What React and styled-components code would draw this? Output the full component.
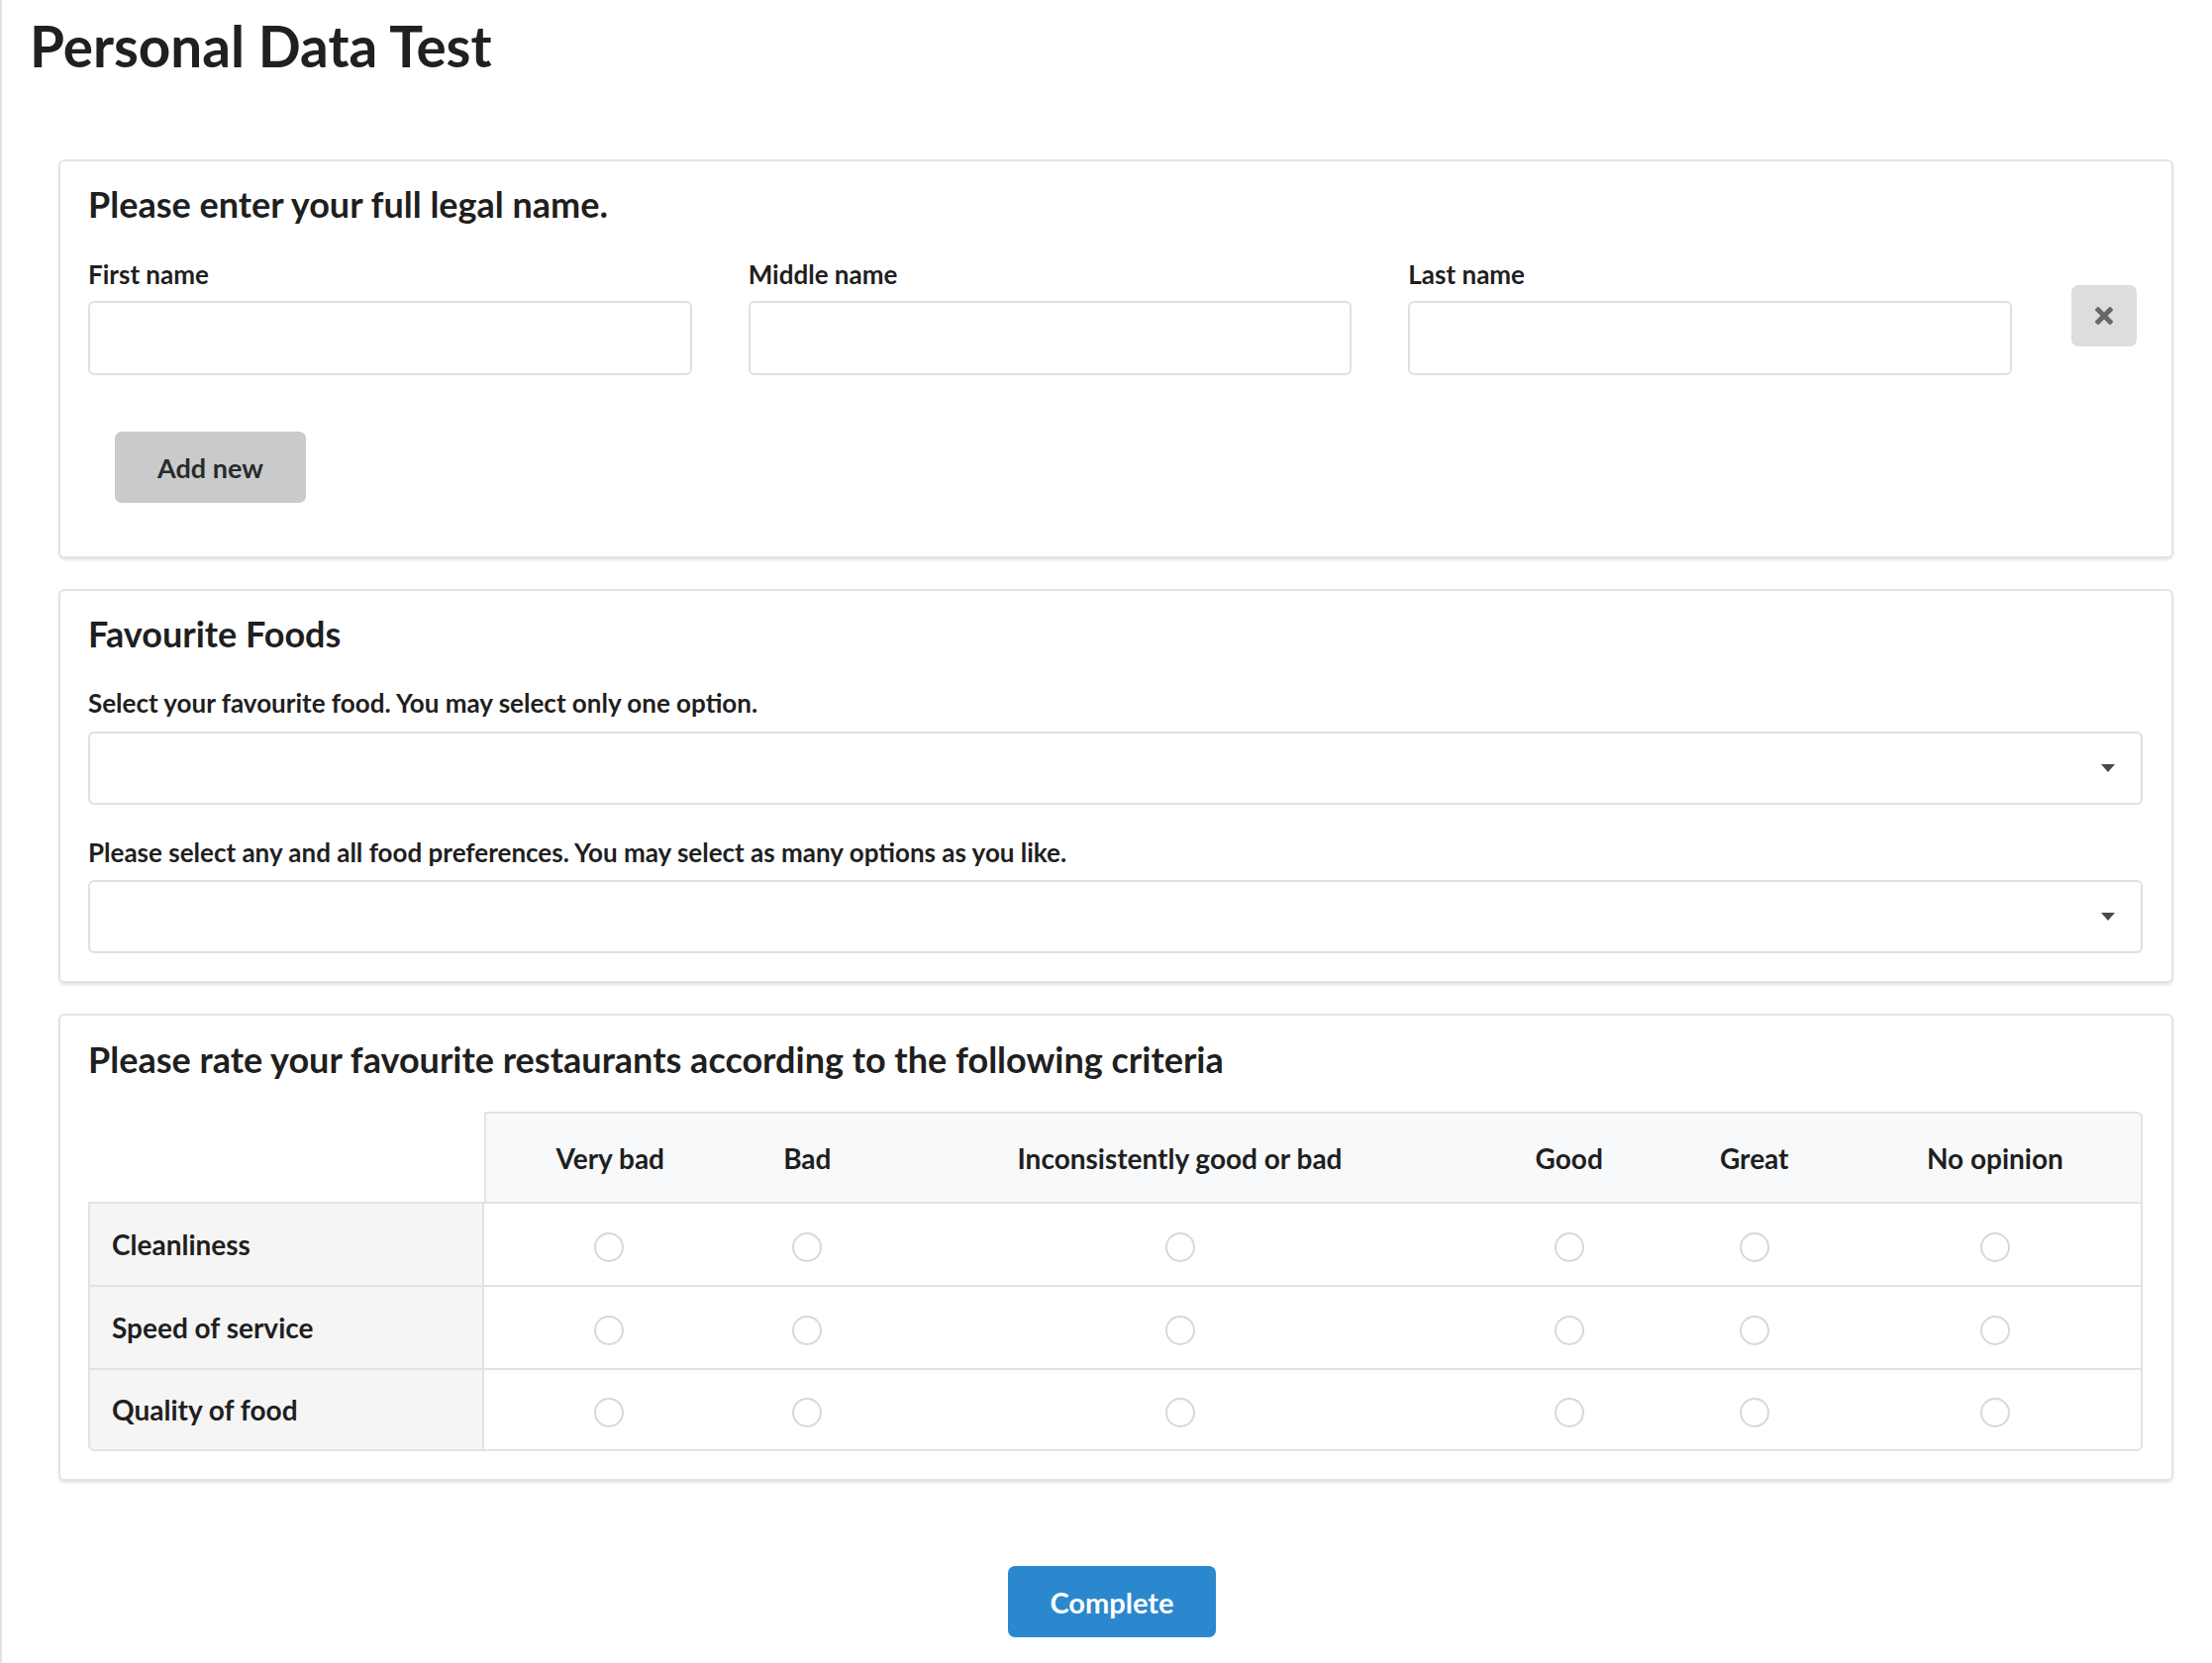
import React from 'react';
import styled, {createGlobalStyle} from 'styled-components';

const GlobalStyle = createGlobalStyle`
    html, body {
        margin: 0;
        padding: 0;
        background: #ffffff;
    }
    body {
        font-family: "Lato", "Liberation Sans", sans-serif;
        color: #1f1f1f;
    }
    * {
        box-sizing: border-box;
    }
`;

const Page = styled.div`
    min-height: 100vh;
    border-left: 2px solid #e2e2e2;
    padding-top: 13px;
    padding-bottom: 40px;
`;

const Title = styled.h1`
    margin: 0 0 80px 28px;
    font-size: 56.6px;
    line-height: 1.2;
    font-weight: 700;
    color: #202020;
`;

const Cards = styled.div`
    display: flex;
    flex-direction: column;
    gap: 31px;
    padding: 0 39px 0 57px;
`;

const Card = styled.section`
    display: flex;
    flex-direction: column;
    border: 2px solid #e3e3e3;
    border-radius: 6px;
    box-shadow: 0px 2px 3px rgba(0, 0, 0, 0.1);
    background: #ffffff;
    padding: ${p => p.$top || 22}px 29px ${p => p.$bottom || 28}px 28px;
`;

const CardTitle = styled.h2`
    margin: 0;
    font-size: 36px;
    line-height: 1.2;
    font-weight: 700;
    color: #1f1f1f;
`;

const FieldRow = styled.div`
    display: flex;
    align-items: flex-start;
    margin-top: 34px;
`;

const Fields = styled.div`
    flex: 1;
    display: flex;
    gap: 57px;
`;

const Field = styled.div`
    flex: 1;
    display: flex;
    flex-direction: column;
`;

const Label = styled.label`
    display: block;
    margin: ${p => p.$top || 0}px 0 ${p => p.$bottom || 12}px;
    font-size: 26px;
    line-height: 1.2;
    font-weight: 700;
    color: #1f1f1f;
`;

const TextInput = styled.input`
    height: 75px;
    width: 100%;
    border: 2px solid #e0e0e0;
    border-radius: 6px;
    background: #ffffff;
    outline: none;
    font-family: inherit;
    font-size: 24px;
    padding: 0 18px;
`;

const RemoveButton = styled.button`
    width: 66px;
    height: 62px;
    margin: 26px 6px 0 60px;
    border: none;
    border-radius: 7px;
    background: #dcdddf;
    display: flex;
    align-items: center;
    justify-content: center;
    padding: 0;
`;

const GrayButton = styled.button`
    align-self: flex-start;
    margin: 57px 0 0 27px;
    height: 72px;
    padding: 0 43px;
    border: none;
    border-radius: 7px;
    background: #c9cacc;
    color: #2a2a2a;
    font-family: inherit;
    font-size: 27px;
    font-weight: 700;
`;

const Dropdown = styled.div`
    height: 74px;
    border: 2px solid #e0e0e0;
    border-radius: 6px;
    display: flex;
    align-items: center;
    justify-content: flex-end;
    padding-right: 26px;
`;

const Table = styled.table`
    width: 100%;
    margin-top: 31px;
    table-layout: fixed;
    border-collapse: separate;
    border-spacing: 0;
    font-size: 28px;
`;

const Col = styled.col`
    width: ${p => p.$w}px;
`;

const HeadCell = styled.th`
    height: 91px;
    padding: 0 10px;
    background: ${p => (p.$empty ? '#ffffff' : '#f8f9fa')};
    border-top: ${p => (p.$empty ? 'none' : '2px solid #e3e3e3')};
    border-left: ${p => (p.$first ? '2px solid #e3e3e3' : 'none')};
    border-right: ${p => (p.$last ? '2px solid #e3e3e3' : 'none')};
    border-top-right-radius: ${p => (p.$last ? '6px' : '0')};
    font-weight: 700;
    color: #1f1f1f;
    white-space: nowrap;
    text-align: center;
`;

const RowHead = styled.td`
    height: 84px;
    padding: 0 22px;
    background: #f5f5f5;
    border-top: 2px solid #e3e3e3;
    border-left: 2px solid #e3e3e3;
    border-right: 2px solid #e3e3e3;
    border-bottom: ${p => (p.$last ? '2px solid #e3e3e3' : 'none')};
    border-bottom-left-radius: ${p => (p.$last ? '6px' : '0')};
    font-weight: 700;
    color: #1f1f1f;
    white-space: nowrap;
    text-align: left;
`;

const Cell = styled.td`
    height: 84px;
    padding: 0;
    border-top: 2px solid #e3e3e3;
    border-right: ${p => (p.$lastCol ? '2px solid #e3e3e3' : 'none')};
    border-bottom: ${p => (p.$last ? '2px solid #e3e3e3' : 'none')};
    border-bottom-right-radius: ${p => (p.$last && p.$lastCol ? '6px' : '0')};
    text-align: center;
    vertical-align: middle;
`;

const Radio = styled.span`
    display: inline-block;
    width: 30px;
    height: 30px;
    border: 2px solid #d8d8d8;
    border-radius: 50%;
    vertical-align: middle;
`;

const Footer = styled.div`
    display: flex;
    justify-content: center;
    padding: 86px 47px 0 57px;
`;

const CompleteButton = styled.button`
    height: 72px;
    padding: 0 42px;
    border: none;
    border-radius: 7px;
    background: #2b88cf;
    color: #ffffff;
    font-family: "Lato", sans-serif;
    font-size: 29px;
    font-weight: 700;
`;

const Caret = () => (
    <svg width="14" height="8" viewBox="0 0 14 8">
        <polygon points="0,0 14,0 7,8" fill="#4a4a4a" />
    </svg>
);

const Cross = () => (
    <svg width="18" height="18" viewBox="0 0 18 18">
        <path d="M3 3 L15 15 M15 3 L3 15" stroke="#676767" strokeWidth="5" strokeLinecap="square" />
    </svg>
);

const columns = [
    {label: 'Very bad', w: 252},
    {label: 'Bad', w: 148},
    {label: 'Inconsistently good or bad', w: 604},
    {label: 'Good', w: 182},
    {label: 'Great', w: 192},
    {label: 'No opinion', w: 296},
];
const rows = ['Cleanliness', 'Speed of service', 'Quality of food'];

export default function App() {
    return (
        <>
            <GlobalStyle />
            <Page>
                <Title>Personal Data Test</Title>
                <Cards>
                    <Card $bottom={54}>
                        <CardTitle>Please enter your full legal name.</CardTitle>
                        <FieldRow>
                            <Fields>
                                <Field>
                                    <Label $bottom={11}>First name</Label>
                                    <TextInput />
                                </Field>
                                <Field>
                                    <Label $bottom={11}>Middle name</Label>
                                    <TextInput />
                                </Field>
                                <Field>
                                    <Label $bottom={11}>Last name</Label>
                                    <TextInput />
                                </Field>
                            </Fields>
                            <RemoveButton aria-label="Remove">
                                <Cross />
                            </RemoveButton>
                        </FieldRow>
                        <GrayButton>Add new</GrayButton>
                    </Card>

                    <Card $bottom={28}>
                        <CardTitle>Favourite Foods</CardTitle>
                        <Label $top={33}>Select your favourite food. You may select only one option.</Label>
                        <Dropdown><Caret /></Dropdown>
                        <Label $top={33}>Please select any and all food preferences. You may select as many options as you like.</Label>
                        <Dropdown><Caret /></Dropdown>
                    </Card>

                    <Card $top={23} $bottom={28}>
                        <CardTitle>Please rate your favourite restaurants according to the following criteria</CardTitle>
                        <Table>
                            <colgroup>
                                <Col $w={400} />
                                {columns.map(c => <Col key={c.label} $w={c.w} />)}
                            </colgroup>
                            <thead>
                                <tr>
                                    <HeadCell $empty />
                                    {columns.map((c, i) => (
                                        <HeadCell key={c.label} $first={i === 0} $last={i === columns.length - 1}>{c.label}</HeadCell>
                                    ))}
                                </tr>
                            </thead>
                            <tbody>
                                {rows.map((r, ri) => (
                                    <tr key={r}>
                                        <RowHead $last={ri === rows.length - 1}>{r}</RowHead>
                                        {columns.map((c, ci) => (
                                            <Cell key={c.label} $last={ri === rows.length - 1} $lastCol={ci === columns.length - 1}>
                                                <Radio />
                                            </Cell>
                                        ))}
                                    </tr>
                                ))}
                            </tbody>
                        </Table>
                    </Card>
                </Cards>
                <Footer>
                    <CompleteButton>Complete</CompleteButton>
                </Footer>
            </Page>
        </>
    );
}
